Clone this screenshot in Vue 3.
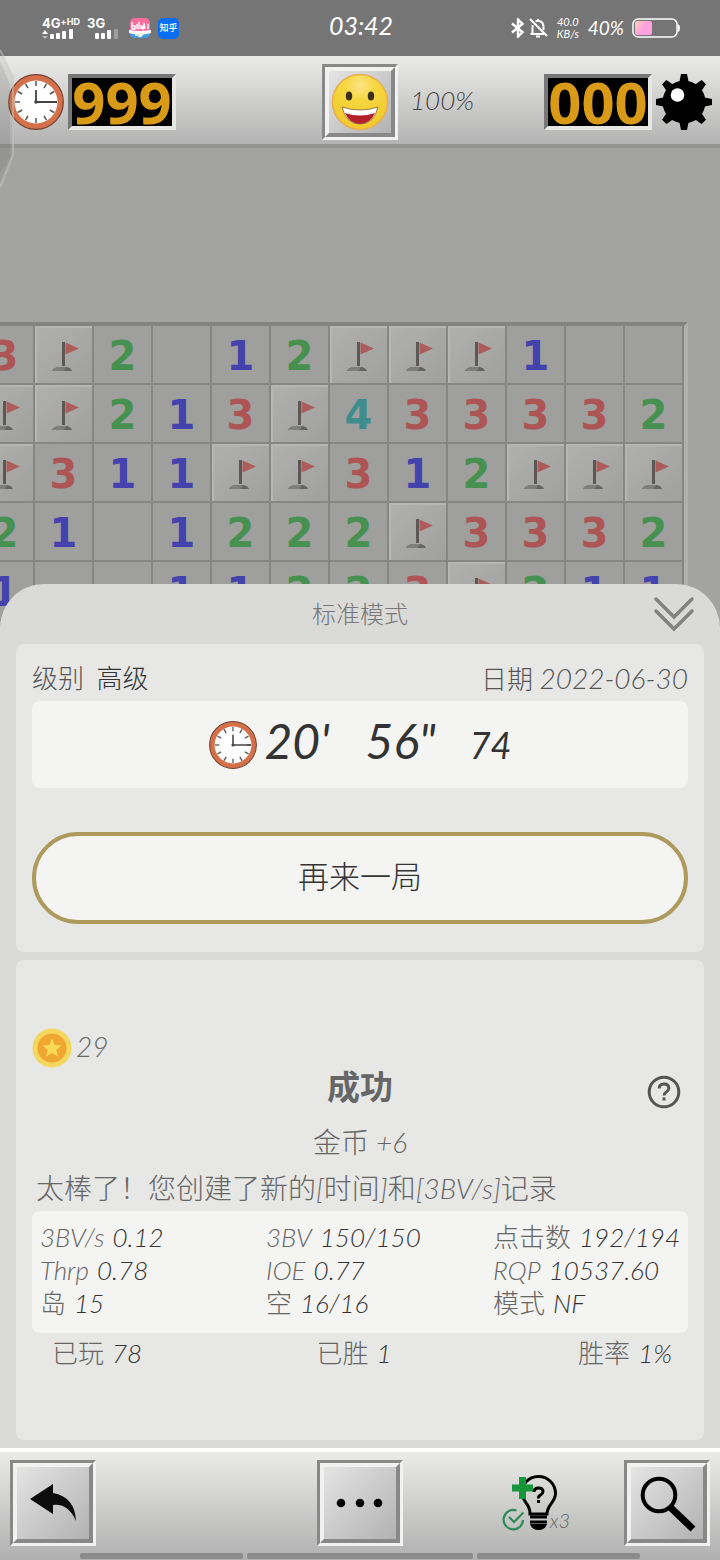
<script setup>
const rows = ['3F2.12FFF1..', 'FF213F433332', 'F311FF312FFF', '21.1222F3332', '1..11223F211'].map((r) => r.split(''))
const ticks = Array.from({ length: 12 }, (_, i) => i * 30)
const teeth = Array.from({ length: 8 }, (_, i) => i * 45)
const stats = [
  ['3BV/s', '0.12'], ['3BV', '150/150'], ['点击数', '192/194'],
  ['Thrp', '0.78'], ['IOE', '0.77'], ['RQP', '10537.60'],
  ['岛', '15'], ['空', '16/16'], ['模式', 'NF'],
]
const totals = [['已玩', '78'], ['已胜', '1'], ['胜率', '1%']]
</script>

<template>
  <div class="page">
    <header class="status">
      <div class="status-left">
        <div class="net">
          <span>4G<sup>+</sup><sup>HD</sup></span>
          <svg width="34" height="11" viewBox="0 0 34 11" fill="#fff"><path d="M0 5 3 1 6 5z" /><path d="M0 7h6L3 10z" opacity=".5" /><rect x="8" y="5" width="4" height="5" rx="1" /><rect x="14" y="4" width="4" height="6" rx="1" /><rect x="20" y="2" width="4" height="8" rx="1" /><rect x="27" y="0" width="4" height="10" rx="1" /></svg>
        </div>
        <div class="net">
          <span>3G</span>
          <svg width="32" height="11" viewBox="0 0 32 11" fill="#fff"><rect x="8" y="4" width="4" height="6" rx="1" /><rect x="14" y="4" width="4" height="6" rx="1" /><rect x="20" y="1" width="4" height="9" rx="1" /><rect x="27" y="0" width="4" height="10" rx="1" opacity=".3" /></svg>
        </div>
        <svg class="bili" width="22" height="22" viewBox="0 0 22 22"><rect x="1" y="1" width="20" height="20" rx="5" fill="#fb6d9b" /><path d="M1 14q10 4 20 0v2q0 5-5 5H6q-5 0-5-5z" fill="#3f9fe0" /><path d="M0 13q11 2 22 0v3q-11 3-22 0z" fill="#fff" /><path d="M3 5v7h3v-3H4M8 7v5M10 5v7M12 12V8l2 4 1-6 1 6M19 7v5M6 18h2v1m2-2v2l2-1v1l2-2" stroke="#fff" stroke-width="1.4" fill="none" /></svg>
        <span class="zhihu">知乎</span>
      </div>
      <time class="clock-text">03:42</time>
      <div class="status-right">
        <svg width="14" height="20" viewBox="0 0 14 20" fill="none" stroke="#fff" stroke-width="2.400"><path d="M1 5.500 11.500 14 7 18.500V1.500L11.500 6 1 14.500" /></svg>
        <svg width="19" height="20" viewBox="0 0 19 20" fill="none" stroke="#fff" stroke-width="2"><path d="M1 1 18 18M1.500 16H15M3.500 16V7M6.500 3.300Q9 2 11.500 3.300 14.500 5 14.500 8.500V12M9 1v2" /><path d="M7 18.500h4" /></svg>
        <div class="speed"><span>40.0</span><span>KB/s</span></div>
        <span class="pct">40%</span>
        <svg width="48" height="20" viewBox="0 0 48 20"><defs><linearGradient id="bat" x2="1" y2=".6"><stop offset="0" stop-color="#fbd3b4" /><stop offset=".6" stop-color="#fda0de" /></linearGradient></defs><rect x="1" y="1" width="44" height="18" rx="5" fill="none" stroke="#fff" stroke-width="1.500" /><rect x="3" y="3" width="17" height="14" rx="2" fill="url(#bat)" /><path d="M46 6q2 1 2 4t-2 4z" fill="#fff" /></svg>
      </div>
    </header>

    <section class="topbar">
      <div class="group">
        <svg class="big-icon" viewBox="0 0 56 56">
          <circle cx="28" cy="28" r="27.300" fill="#d4714a" stroke="#75402e" stroke-width="1.200" /><circle cx="28" cy="28" r="21.500" fill="#fff" />
          <path v-for="t in ticks" :key="t" d="M28 7v5" :transform="`rotate(${t} 28 28)`" stroke="#555" stroke-width="1.500" />
          <path d="M28 16v12h21" fill="none" stroke="#444" stroke-width="1.800" /><circle cx="28" cy="28" r="1.800" fill="#444" />
        </svg>
        <output class="lcd">999</output>
      </div>
      <button class="key face" aria-label="笑脸">
        <span class="key-in">
          <svg width="58" height="58" viewBox="0 0 58 58"><defs><radialGradient id="sm" cx=".5" cy=".2" r=".8"><stop offset="0" stop-color="#fbe486" /><stop offset=".35" stop-color="#f7d63f" /><stop offset="1" stop-color="#f0c92c" /></radialGradient></defs><circle cx="29" cy="29" r="27.500" fill="url(#sm)" stroke="#e9ae50" stroke-width="1.500" /><ellipse cx="18" cy="23" rx="3.200" ry="4.500" fill="#3a3018" /><ellipse cx="40" cy="23" rx="3.200" ry="4.500" fill="#3a3018" /><path d="M11 34q18 6 36 0-4 17-18 17T11 34z" fill="#fff" stroke="#886024" stroke-width=".8" /><path d="M14 40q15 5 30 0-5 11-15 11T14 40z" fill="#b3202c" /></svg>
        </span>
      </button>
      <div class="group right">
        <span class="zoom">100%</span>
        <output class="lcd">000</output>
        <svg class="big-icon" viewBox="0 0 56 56"><circle cx="28" cy="28" r="21.500" /><path v-for="t in teeth" :key="t" d="M25 0h6l2 10H23z" :transform="`rotate(${t} 28 28)`" /><circle cx="21.500" cy="21" r="6.800" fill="#fff" /></svg>
      </div>
    </section>
    <svg class="edge" width="16" height="144" viewBox="0 0 16 144"><path d="M0 4 14 30V108L0 140z" fill="#777" opacity=".12" /><path d="M0 3 13 30V108L0 140" fill="none" stroke="#ccc" stroke-width="2" opacity=".5" /><path d="M0 14 10 38V110L0 126z" fill="#666" opacity=".14" /></svg>

    <main class="field">
      <div class="board">
        <template v-for="(row, y) in rows" :key="y">
          <div v-for="(c, x) in row" :key="x" class="cell" :class="c === 'F' ? 'up' : 'n' + c">
            <svg v-if="c === 'F'" width="30" height="32" viewBox="-2 -1 30 32"><path d="M1 30q1-3 6-4h9q4 1 5 4z" fill="#646462" /><path d="M1 30q1-3 6-4h8q-1 3-3 4z" fill="#7e7e7c" /><rect x="11" y="1" width="3" height="24" fill="#5d5755" /><path d="M14.500 1.500 28 7.500 14.500 13.500z" fill="#ad5c5c" /></svg>
            <template v-else-if="c !== '.'">{{ c }}</template>
          </div>
        </template>
      </div>
    </main>

    <section class="sheet">
      <div class="sheet-head">
        <h2>标准模式</h2>
        <button class="plain fold" aria-label="收起"><svg width="42" height="36" viewBox="0 0 42 36" fill="none" stroke="#818181" stroke-width="3.500" stroke-linecap="round"><path d="M3 3 21 21 39 3M3 15 21 33 39 15" /></svg></button>
      </div>

      <div class="card first">
        <div class="meta"><span>级别 <b>高级</b></span><span>日期 <i>2022-06-30</i></span></div>
        <div class="time">
          <svg width="48" height="48" viewBox="0 0 56 56">
            <circle cx="28" cy="28" r="27.300" fill="#d4714a" stroke="#75402e" stroke-width="1.200" /><circle cx="28" cy="28" r="21.500" fill="#fff" />
            <path v-for="t in ticks" :key="t" d="M28 7v5" :transform="`rotate(${t} 28 28)`" stroke="#555" stroke-width="1.500" />
            <path d="M28 16v12h21" fill="none" stroke="#444" stroke-width="1.800" /><circle cx="28" cy="28" r="1.800" fill="#444" />
          </svg>
          <span class="minute">20'</span><span class="second">56"</span><span class="cent">74</span>
        </div>
        <button class="again">再来一局</button>
      </div>

      <div class="card result">
        <div class="coins">
          <svg width="40" height="40" viewBox="0 0 40 40"><circle cx="20" cy="20" r="19.500" fill="#f4d75c" /><circle cx="20" cy="20" r="14.500" fill="#f0a732" /><path d="M20 10.500l2.700 6.500 6.800.5-5.200 4.400 1.700 6.700-6-3.700-6 3.700 1.700-6.700-5.200-4.400 6.800-.5z" fill="#f6da58" /></svg>
          <span>29</span>
        </div>
        <div class="win">
          <h1>成功</h1>
          <button class="plain help" aria-label="帮助"><svg width="34" height="34" viewBox="0 0 34 34" fill="none" stroke="#555" stroke-width="3"><circle cx="17" cy="17" r="14.800" /><path d="M12.200 13.500q0-4.500 4.800-4.500t4.800 4.200q0 2-2.400 3.700T17 20.500M17 22.500v3" /></svg></button>
        </div>
        <p class="gain">金币 +6</p>
        <p class="msg">太棒了！您创建了新的[时间]和[3BV/s]记录</p>
        <dl class="stats"><div v-for="s in stats" :key="s[0]"><dt>{{ s[0] }}</dt><dd>{{ s[1] }}</dd></div></dl>
        <dl class="totals"><div v-for="s in totals" :key="s[0]"><dt>{{ s[0] }}</dt><dd>{{ s[1] }}</dd></div></dl>
      </div>
    </section>

    <footer class="toolbar">
      <nav class="tools">
        <button class="key" aria-label="返回"><span class="key-in"><svg width="48" height="40" viewBox="0 0 48 40"><path d="M1 16 24 1V10Q46 14 47 38 39 20 24 22V31z" fill="#0c0c0c" /></svg></span></button>
        <button class="key" aria-label="更多"><span class="key-in"><svg width="48" height="10" viewBox="0 0 48 10"><circle cx="5" cy="5" r="4.300" /><circle cx="24" cy="5" r="4.300" /><circle cx="42" cy="5" r="4.300" /></svg></span></button>
        <div class="tools-right">
          <button class="plain hint" aria-label="提示 x3">
            <svg width="56" height="58" viewBox="0 0 56 58"><path d="M28 39C28 30 21 28 19.500 20A17 17 0 0 1 36 2.500 17 17 0 0 1 53.500 19.500C53.500 28 45 31 45 40H28z" fill="none" stroke="#000" stroke-width="3" /><path d="M28 43h17M28 48h17" stroke="#000" stroke-width="3" /><path d="M28 50h17q-2 6-8.500 6T28 50z" /><path d="M32 18q0-4 4.500-4t4.500 3.500q0 2-2.500 3.500T36.500 24.500M36.500 26v3" fill="none" stroke="#000" stroke-width="3" /><path d="M17 3h7v7.500h7v7h-7V25h-7v-7.500h-7v-7h7z" fill="#16963a" /><path d="M14.500 36.500A9.700 9.700 0 1 0 21 46M7 43l5 5 9.500-9.500" fill="none" stroke="#2d8b57" stroke-width="2.200" /></svg><span>x3</span>
          </button>
          <button class="key" aria-label="搜索"><span class="key-in"><svg width="58" height="58" viewBox="0 0 58 58" fill="none" stroke="#000"><circle cx="21" cy="21" r="16.300" stroke-width="4" /><path d="M32 33 55 55" stroke-width="7" /></svg></span></button>
        </div>
      </nav>
      <div class="pill"><i></i><i></i><i></i></div>
    </footer>
  </div>
</template>

<style>
body { background: #a3a3a1; }
</style>
<style scoped>
* { box-sizing: border-box; margin: 0; }
.page { position: relative; min-height: 100vh; display: flex; flex-direction: column; overflow: hidden; background: #a3a3a1; font-family: Lato, "Noto Sans CJK SC", sans-serif; font-style: italic; font-weight: 300; font-synthesis: none; font-size: 26px; line-height: 32px; color: #333; }
svg { display: block; flex: none; }
button { font: inherit; color: inherit; padding: 0; font-synthesis: none; }
b, i { font-weight: inherit; }
.status { height: 56px; background: #757575; display: grid; grid-template-columns: 1fr auto 1fr; align-items: center; color: #fff; padding: 0 40px 0 42px; }
.status-left, .status-right { display: flex; align-items: center; }
.status-right { justify-content: flex-end; gap: 4px; }
.net { font: bold 13px/12px Inter, sans-serif; width: 45px; }
.net + .net { width: 42px; }
.net sup { font-size: 9px; line-height: 8px; vertical-align: 3px; }
.zhihu { margin-left: 7px; width: 21px; height: 21px; border-radius: 5px; background: #0b6ef0; font: 500 9px/20px "Noto Sans CJK SC", sans-serif; text-align: center; }
.clock-text { font-size: 25px; font-weight: 400; line-height: 50px; height: 56px; }
.speed { display: flex; flex-direction: column; font-size: 11px; line-height: 12px; width: 32px; align-items: center; font-weight: 400; }
.pct { font-size: 19px; font-weight: 400; margin-right: 4px; line-height: 20px; }
.topbar { height: 92px; border-bottom: 4px solid #949492; background: linear-gradient(#ebebe9, #b3b3b3); display: grid; grid-template-columns: 1fr auto 1fr; align-items: center; padding: 4px 8px 0; }
.group { display: flex; align-items: center; gap: 4px; }
.big-icon { width: 56px; height: 56px; }
.lcd { display: flex; align-items: center; justify-content: center; border: 4px solid; border-color: #777 #e6e6e4 #e6e6e4 #777; background: #000; color: #d99a18; width: 108px; height: 56px; font: bold 58px/48px "Noto Sans", sans-serif; }
.zoom { margin: 0 auto 4px 12px; color: #444; }
.key { width: 86px; height: 86px; border: 3px solid; border-color: #888 #f2f2f0 #f2f2f0 #888; background: none; }
.face { width: 76px; height: 76px; }
.key-in { display: flex; align-items: center; justify-content: center; width: 100%; height: 100%; border: 4px solid; border-color: #f1f1f0 #888 #888 #f1f1f0; background: linear-gradient(135deg, #e4e4e4, #b2b2b2); overflow: hidden; }
.edge { position: absolute; left: 0; top: 47px; }
.field { padding: 174px 32px 11px 0; display: flex; justify-content: flex-end; }
.board { flex: none; display: grid; grid-template-columns: repeat(12, 59px); grid-auto-rows: 59px; border: 0 solid; border-width: 4px 4px 0 0; border-color: #838381 #b0b0ae; }
.cell { display: flex; align-items: center; justify-content: center; border: 0 solid #868684; border-width: 0 2px 2px 0; background: #9f9f9d; font: bold 40px/44px "DejaVu Sans", sans-serif; padding-top: 2px; }
.up { background: linear-gradient(135deg, #b0b0ae, #a0a09e); box-shadow: inset 2px 2px #b6b6b4; }
.n1 { color: #4442ac; } .n2 { color: #469050; } .n3 { color: #ad5555; } .n4 { color: #3f8c8e; }
.sheet { position: relative; margin-top: -48px; flex: 1; display: flex; flex-direction: column; background: #dadad9; border-radius: 44px 44px 0 0; padding: 0 16px 8px; }
.sheet-head { height: 60px; display: grid; grid-template-columns: 1fr auto 1fr; align-items: center; color: #777; }
h2 { grid-column: 2; font-size: 24px; font-weight: 300; line-height: 32px; }
.plain { border: 0; background: none; display: flex; }
.fold { justify-self: end; margin-right: 9px; }
.card { background: #e7e7e5; border-radius: 8px; padding: 0 16px; }
.first { height: 308px; margin-bottom: 8px; }
.meta { display: flex; justify-content: space-between; height: 57px; line-height: 68px; color: #555; }
.meta b { color: #333; margin-left: 6px; }
.meta i { font-size: 28px; }
.time { height: 87px; border-radius: 8px; background: #f4f4f2; display: flex; align-items: center; justify-content: center; }
.minute, .second { font-size: 48px; font-weight: 400; line-height: 72px; margin-bottom: 8px; }
.minute { margin-right: 36px; margin-left: 8px; }
.cent { font-size: 36px; font-weight: 400; line-height: 72px; margin-left: 34px; }
.again { display: block; width: 100%; height: 92px; margin-top: 44px; border: 4px solid #ad9a5c; border-radius: 46px; background: #f4f4f2; font-size: 31px; padding-bottom: 4px; }
.result { flex: 1; padding-top: 68px; padding-bottom: 64px; color: #666; }
.coins { display: flex; align-items: center; gap: 4px; font-size: 28px; height: 40px; }
.coins span { margin-bottom: 4px; }
.win { display: grid; grid-template-columns: 1fr auto 1fr; align-items: center; height: 44px; }
h1 { grid-column: 2; font-size: 33px; font-weight: 700; line-height: 32px; color: #666; margin-bottom: 8px; }
.help { justify-self: end; margin: 4px 7px 0 0; }
.gain { text-align: center; font-size: 28px; line-height: 36px; margin-top: 12px; }
.msg { padding-left: 4px; font-size: 28px; line-height: 36px; margin-top: 10px; }
dl div { display: flex; gap: 8px; white-space: nowrap; }
dd { color: #333; }
.stats { margin-top: 5px; background: #f4f4f2; border-radius: 8px; padding: 10px 8px 13px; display: grid; grid-template-columns: 226fr 227fr 187fr; line-height: 33px; }
.totals { display: grid; grid-template-columns: 263fr 260fr auto; padding: 2px 16px 0 20px; line-height: 36px; }
.toolbar { position: relative; height: 112px; border-top: 4px solid #fff; background: linear-gradient(#ebebe9, #b0b0b0); }
.tools { padding: 8px 10px 0; display: grid; grid-template-columns: 1fr auto 1fr; }
.tools-right { display: flex; align-items: center; justify-content: flex-end; gap: 54px; }
.hint { align-items: flex-end; font-size: 20px; line-height: 24px; color: #666; }
.hint span { margin-left: -8px; }
.pill { display: flex; gap: 4px; margin: 7px 80px 0; }
.pill i { height: 6px; background: #8b8b8b; border-radius: 2px; flex: 164; }
.pill i:nth-child(2) { flex: 226; }
</style>
